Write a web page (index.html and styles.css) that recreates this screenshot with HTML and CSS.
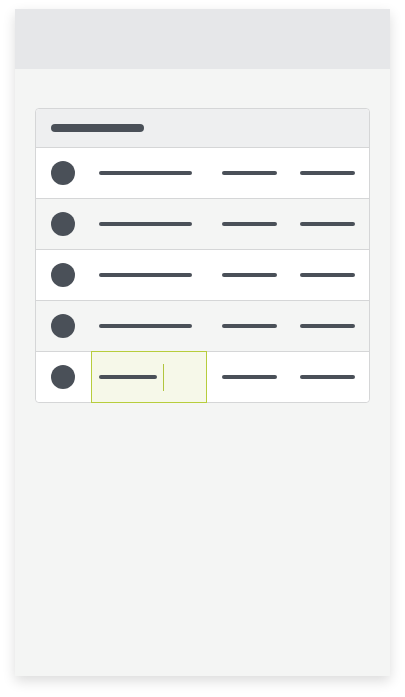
FILE: index.html
```html
<!DOCTYPE html>
<html lang="en">
<head>
  <meta charset="UTF-8" />
  <meta name="viewport" content="width=device-width, initial-scale=1.0"/>
  <title>Table edit</title>
  <link rel="stylesheet" href="styles.css">
</head>
<body>
  <main class="screen">
    <header class="topbar"></header>
    <section class="content">
      <div class="table">
        <div class="table-head"><span class="bar bar-title"></span></div>
        <div class="row">
          <div class="cell cell-avatar"><span class="dot"></span></div>
          <div class="cell cell-name"><span class="bar bar-name"></span></div>
          <div class="cell cell-c"><span class="bar bar-short"></span></div>
          <div class="cell cell-d"><span class="bar bar-short"></span></div>
        </div>
        <div class="row alt">
          <div class="cell cell-avatar"><span class="dot"></span></div>
          <div class="cell cell-name"><span class="bar bar-name"></span></div>
          <div class="cell cell-c"><span class="bar bar-short"></span></div>
          <div class="cell cell-d"><span class="bar bar-short"></span></div>
        </div>
        <div class="row">
          <div class="cell cell-avatar"><span class="dot"></span></div>
          <div class="cell cell-name"><span class="bar bar-name"></span></div>
          <div class="cell cell-c"><span class="bar bar-short"></span></div>
          <div class="cell cell-d"><span class="bar bar-short"></span></div>
        </div>
        <div class="row alt">
          <div class="cell cell-avatar"><span class="dot"></span></div>
          <div class="cell cell-name"><span class="bar bar-name"></span></div>
          <div class="cell cell-c"><span class="bar bar-short"></span></div>
          <div class="cell cell-d"><span class="bar bar-short"></span></div>
        </div>
        <div class="row last">
          <div class="cell cell-avatar"><span class="dot"></span></div>
          <div class="cell cell-name editing"><span class="bar bar-edit"></span><span class="caret"></span></div>
          <div class="cell cell-c"><span class="bar bar-short"></span></div>
          <div class="cell cell-d"><span class="bar bar-short"></span></div>
        </div>
      </div>
    </section>
  </main>
</body>
</html>
```

FILE: styles.css
```css
body {
  margin: 0;
  padding: 9px 15px 21px;
  background: #fff;
  font-family: "Liberation Sans", sans-serif;
}
.screen {
  width: 375px;
  height: 667px;
  display: flex;
  flex-direction: column;
  background: #f4f5f4;
  box-shadow: 0 5px 12px rgba(0, 0, 0, 0.14);
}
.topbar {
  height: 60px;
  background: #e6e7e9;
}
.content {
  padding: 39px 20px 0;
}
.table {
  border: 1px solid #d5d6d7;
  border-radius: 4px;
  background: #fff;
}
.table-head {
  height: 38px;
  display: flex;
  align-items: center;
  padding-left: 15px;
  background: #eeeff0;
  border-bottom: 1px solid #d5d6d7;
  border-radius: 4px 4px 0 0;
}
.row {
  display: grid;
  grid-template-columns: 55px 116px 78px 84px;
  height: 50px;
  background: #fff;
  border-bottom: 1px solid #d5d6d7;
}
.row.alt {
  background: #f4f5f4;
}
.row.last {
  border-bottom: none;
  border-radius: 0 0 4px 4px;
}
.cell {
  display: flex;
  align-items: center;
}
.cell-avatar {
  padding-left: 15px;
}
.cell-name {
  padding-left: 8px;
}
.cell-c,
.cell-d {
  padding-left: 15px;
}
.editing {
  margin: -1px 0;
  padding-left: 7px;
  border: 1px solid #b7cd3c;
  background: #f6f8e9;
}
.dot {
  width: 24px;
  height: 24px;
  border-radius: 50%;
  background: #4a5058;
}
.bar {
  display: block;
  height: 4px;
  border-radius: 2px;
  background: #4a5058;
}
.bar-title {
  width: 93px;
  height: 8px;
  border-radius: 4px;
}
.bar-name { width: 93px; }
.bar-short { width: 55px; }
.bar-edit { width: 58px; }
.caret {
  width: 1px;
  height: 27px;
  margin-left: 6px;
  background: #b1c53d;
}
```
